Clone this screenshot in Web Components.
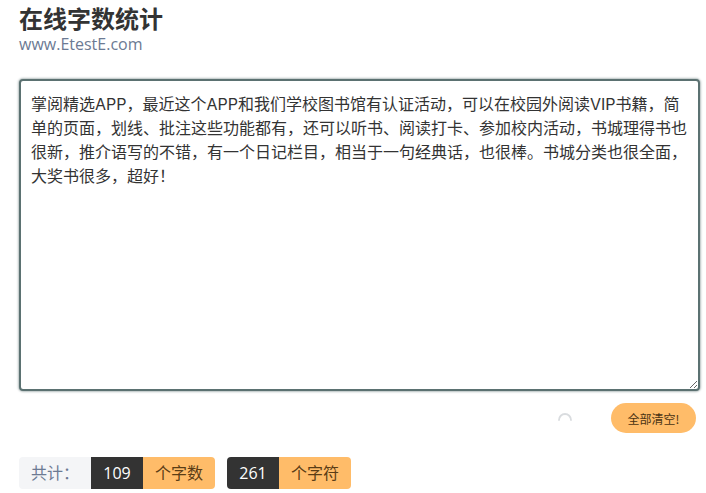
<!DOCTYPE html>
<html lang="zh">
<head>
<meta charset="utf-8">
<title>在线字数统计</title>
<style>
  html, body { margin: 0; background: #fff; }
  body { font-family: "Open Sans", "Noto Sans CJK SC", sans-serif; overflow: hidden; }
</style>
</head>
<body>
<count-page>
  <count-header slot="head" title="在线字数统计" site="www.EtestE.com"></count-header>
  <count-editor slot="edit">掌阅精选APP，最近这个APP和我们学校图书馆有认证活动，可以在校园外阅读VIP书籍，简单的页面，划线、批注这些功能都有，还可以听书、阅读打卡、参加校内活动，书城理得书也很新，推介语写的不错，有一个日记栏目，相当于一句经典话，也很棒。书城分类也很全面，大奖书很多，超好！</count-editor>
  <count-actions slot="actions"></count-actions>
  <count-totals slot="totals"></count-totals>
</count-page>
<script>
class CountPage extends HTMLElement {
  constructor () {
    super()
    this.attachShadow({ mode: 'open' })
    this.shadowRoot.innerHTML = `
      <style>
        :host { display: flex; flex-direction: column; padding: 0 6px 0 19px; height: 493px; box-sizing: border-box; }
      </style>
      <slot name="head"></slot>
      <slot name="edit"></slot>
      <slot name="actions"></slot>
      <slot name="totals"></slot>
    `
  }
}

class CountHeader extends HTMLElement {
  constructor () {
    super()
    this.attachShadow({ mode: 'open' })
  }

  connectedCallback () {
    this.shadowRoot.innerHTML = `
      <style>
        :host { display: block; padding-top: 3px; height: 79px; box-sizing: border-box; }
        h1 { margin: 0; font: 700 24px/30px "Noto Sans CJK SC", sans-serif; color: #333; }
        p { margin: 0; font: 400 16px/22px "Open Sans", sans-serif; color: #6c7a93; }
      </style>
      <h1>${this.getAttribute('title')}</h1>
      <p>${this.getAttribute('site')}</p>
    `
  }
}

class CountEditor extends HTMLElement {
  constructor () {
    super()
    this.attachShadow({ mode: 'open' })
  }

  connectedCallback () {
    this.shadowRoot.innerHTML = `
      <style>
        :host { display: block; height: 312px; }
        textarea {
          display: block; width: 100%; height: 100%; box-sizing: border-box; margin: 0;
          padding: 11px 10px; border: 2px solid #5b7171; border-radius: 4px;
          box-shadow: 0 0 2px 1px rgba(91, 113, 113, .45); outline: none; background: #fff;
          font: 400 16px/24px Inter, "Noto Sans CJK SC", sans-serif; color: #333;
        }
      </style>
      <textarea spellcheck="false"></textarea>
    `
    this.shadowRoot.querySelector('textarea').value = this.textContent
  }
}

class CountActions extends HTMLElement {
  constructor () {
    super()
    this.attachShadow({ mode: 'open' })
    this.shadowRoot.innerHTML = `
      <style>
        :host { display: flex; align-items: flex-start; justify-content: flex-end; gap: 39px; height: 66px; padding: 12px 4px 0 0; box-sizing: border-box; }
        svg { display: block; width: 14px; height: 14px; margin-top: 8px; }
        button {
          width: 85px; height: 30px; padding: 0; border: 0; border-radius: 15px;
          background: #ffbc69; color: #4a3313;
          font: 400 12px "Noto Sans CJK SC", sans-serif;
        }
      </style>
      <svg viewBox="0 0 14 14" fill="none" stroke="#d9dcdf" stroke-width="1.8" stroke-linecap="round">
        <path d="M1 9 A6 6 0 0 1 13 9"/>
      </svg>
      <button type="button">全部清空!</button>
    `
  }
}

class CountTotals extends HTMLElement {
  constructor () {
    super()
    this.attachShadow({ mode: 'open' })
    this.shadowRoot.innerHTML = `
      <style>
        :host { display: flex; gap: 12px; font: 400 16px/32px "Open Sans", "Noto Sans CJK SC", sans-serif; }
        .group { display: flex; height: 32px; border-radius: 4px; overflow: hidden; }
        .label { width: 72px; padding-left: 12px; box-sizing: border-box; background: #f4f5f7; color: #6c7a93; }
        .num { width: 52px; text-align: center; background: #333; color: #fff; }
        .unit { width: 72px; text-align: center; background: #ffbc69; color: #5a3d16; }
      </style>
      <div class="group">
        <span class="label">共计：</span>
        <span class="num">109</span>
        <span class="unit">个字数</span>
      </div>
      <div class="group">
        <span class="num">261</span>
        <span class="unit">个字符</span>
      </div>
    `
  }
}

customElements.define('count-page', CountPage)
customElements.define('count-header', CountHeader)
customElements.define('count-editor', CountEditor)
customElements.define('count-actions', CountActions)
customElements.define('count-totals', CountTotals)
</script>
</body>
</html>
